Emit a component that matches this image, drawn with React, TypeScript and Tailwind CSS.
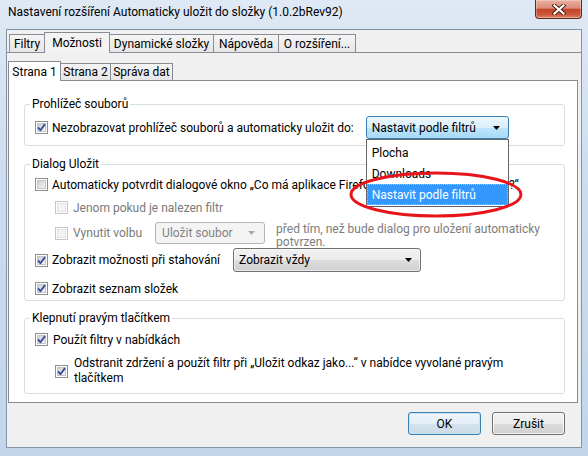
import React from "react";

function Check({ checked, disabled }: { checked?: boolean; disabled?: boolean }) {
  return (
    <svg width="13" height="13" viewBox="0 0 13 13" className="shrink-0">
      <defs>
        <linearGradient id="cbg" x1="0" y1="0" x2="1" y2="1">
          <stop offset="0" stopColor="#cdcdcd" />
          <stop offset="1" stopColor="#f7f7f7" />
        </linearGradient>
      </defs>
      <rect x="0.5" y="0.5" width="12" height="12" fill="#ffffff" stroke={disabled ? "#c6c6c6" : "#8e8f8f"} />
      <rect
        x="2.5"
        y="2.5"
        width="8"
        height="8"
        fill={disabled ? "#f3f3f3" : "url(#cbg)"}
        stroke={disabled ? "#e3e3e3" : "#c4c4c4"}
      />
      {checked && (
        <path d="M3.1 6.4 L5.4 9.2 L10 3.1" fill="none" stroke="#33489a" strokeWidth="1.8" strokeLinejoin="round" />
      )}
    </svg>
  );
}

function Arrow({ color }: { color: string }) {
  return (
    <svg width="7" height="4" viewBox="0 0 7 4" className="shrink-0">
      <path d="M0 0 H7 L3.5 4 Z" fill={color} />
    </svg>
  );
}

export default function App() {
  return (
    <div className="relative w-[588px] h-[456px] overflow-hidden flex flex-col bg-[linear-gradient(180deg,#dfe9f5,#cddcee_40%,#c2d5eb)] font-['Roboto',sans-serif] text-[12px] text-black">
      {/* title bar */}
      <div className="h-[29px] shrink-0 flex items-start">
        <div className="pl-[8px] pt-[5px] leading-[15px] whitespace-nowrap">
          Nastavení rozšíření Automaticky uložit do složky (1.0.2bRev92)
        </div>
        <div className="ml-auto mr-[6px] w-[47px] h-[19px] rounded-b-[4px] border border-t-0 border-[#5b2b22] bg-[linear-gradient(180deg,#eaae9f,#dc8c79_45%,#c4452a_52%,#cc5538_80%,#e0866a)] shadow-[inset_0_0_0_1px_rgba(255,255,255,0.3)] flex items-center justify-center">
          <svg width="14" height="11" viewBox="0 0 14 11" className="mt-[1px]">
            <path d="M2.5 1.5 L11.5 9.5 M11.5 1.5 L2.5 9.5" stroke="#4a1b12" strokeWidth="4" strokeLinecap="square" />
            <path d="M2.5 1.5 L11.5 9.5 M11.5 1.5 L2.5 9.5" stroke="#ffffff" strokeWidth="2.2" strokeLinecap="square" />
          </svg>
        </div>
      </div>

      {/* client area */}
      <div className="mx-[6px] h-[419px] shrink-0 border border-[#8493a6] bg-[#f0f0f0] flex flex-col">
        {/* top tabs */}
        <div className="h-[23px] shrink-0 flex items-end pl-[2px] border-b border-[#898c95]">
          <div className="w-[36px] h-[18px] flex items-center justify-center border border-b-0 border-[#898c95] bg-[linear-gradient(#f5f5f5,#e6e6e6)]">
            Filtry
          </div>
          <div className="relative z-10 -ml-px -mb-px w-[66px] h-[21px] flex items-center justify-center border border-b-0 border-[#898c95] bg-[#f3f3f3]">
            Možnosti
          </div>
          <div className="-ml-px w-[105px] h-[18px] flex items-center justify-center border border-b-0 border-[#898c95] bg-[linear-gradient(#f5f5f5,#e6e6e6)]">
            Dynamické složky
          </div>
          <div className="-ml-px w-[66px] h-[18px] flex items-center justify-center border border-b-0 border-[#898c95] bg-[linear-gradient(#f5f5f5,#e6e6e6)]">
            Nápověda
          </div>
          <div className="-ml-px w-[78px] h-[18px] flex items-center justify-center border border-b-0 border-[#898c95] bg-[linear-gradient(#f5f5f5,#e6e6e6)]">
            O rozšíření...
          </div>
        </div>

        {/* tab page */}
        <div className="flex-1 flex flex-col">
          <div className="ml-[1px] mr-[3px] flex flex-col">
            {/* sub tabs */}
            <div className="h-[27px] flex items-end">
              <div className="relative z-10 -mb-px w-[53px] h-[20px] flex items-center justify-center border border-b-0 border-[#898c95] bg-white">
                Strana 1
              </div>
              <div className="-ml-px w-[51px] h-[17px] flex items-center justify-center border border-b-0 border-[#898c95] bg-[linear-gradient(#f5f5f5,#e6e6e6)]">
                Strana 2
              </div>
              <div className="-ml-px w-[63px] h-[17px] flex items-center justify-center border border-b-0 border-[#898c95] bg-[linear-gradient(#f5f5f5,#e6e6e6)]">
                Správa dat
              </div>
            </div>

            {/* white panel */}
            <div className="h-[323px] border border-[#898c95] bg-white flex flex-col">
              {/* group 1 */}
              <fieldset className="ml-[15px] mr-[12px] mt-[16px] border border-[#d5dfe5] rounded-[3px] pl-[10px] pr-[10px] pb-[6px]">
                <legend className="-ml-[5px] px-[2px] leading-[14px]">Prohlížeč souborů</legend>
                <div className="mt-[5px] h-[23px] flex items-center">
                  <Check checked />
                  <span className="ml-[4px] whitespace-nowrap">Nezobrazovat prohlížeč souborů a automaticky uložit do:</span>
                  <div className="relative ml-[12px] w-[143px] h-[23px] shrink-0">
                    <div className="w-full h-full rounded-[3px] border border-[#3c7fb1] bg-[linear-gradient(#eaf6fd,#d9f0fc_50%,#bee6fd_50%,#a7d9f5)] flex items-center pl-[5px] pr-[8px]">
                      <span className="flex-1 whitespace-nowrap">Nastavit podle filtrů</span>
                      <Arrow color="#000000" />
                    </div>
                    {/* open dropdown list */}
                    <div className="absolute left-0 top-full z-20 w-full border border-[#646464] bg-white pt-[2px] pb-[1px]">
                      <div className="h-[21px] flex items-center pl-[5px]">Plocha</div>
                      <div className="h-[21px] flex items-center pl-[5px]">Downloads</div>
                      <div className="h-[21px] flex items-center pl-[4px] bg-[#3399ff] text-white border border-dotted border-[#e2c060]">
                        Nastavit podle filtrů
                      </div>
                    </div>
                  </div>
                </div>
              </fieldset>

              {/* group 2 */}
              <fieldset className="ml-[15px] mr-[12px] mt-[11px] border border-[#d5dfe5] rounded-[3px] pl-[10px] pr-[10px] pb-[3px]">
                <legend className="-ml-[5px] px-[2px] leading-[14px]">Dialog Uložit</legend>
                <div className="mt-[5px] h-[17px] flex items-center">
                  <Check />
                  <span className="ml-[4px] whitespace-nowrap">
                    Automaticky potvrdit dialogové okno „Co má aplikace Firefox udělat s tímto souborem?“
                  </span>
                </div>
                <div className="mt-[6px] h-[17px] flex items-center pl-[20px] text-[#7a7a7a]">
                  <Check disabled />
                  <span className="ml-[5px] whitespace-nowrap">Jenom pokud je nalezen filtr</span>
                </div>
                <div className="mt-[6px] h-[26px] flex items-start pl-[20px] text-[#7a7a7a]">
                  <div className="h-[22px] flex items-center shrink-0">
                    <Check disabled />
                    <span className="ml-[5px] whitespace-nowrap">Vynutit volbu</span>
                  </div>
                  <div className="ml-[13px] w-[110px] h-[22px] shrink-0 rounded-[3px] border border-[#b2b6ba] bg-[#f4f4f4] flex items-center pl-[6px] pr-[9px]">
                    <span className="flex-1 whitespace-nowrap text-[#838383]">Uložit soubor</span>
                    <Arrow color="#a8a8a8" />
                  </div>
                  <div className="ml-[11px] pt-[1px] leading-[13px] text-[#7d7d7d]">
                    před tím, než bude dialog pro uložení automaticky potvrzen.
                  </div>
                </div>
                <div className="h-[24px] flex items-center">
                  <Check checked />
                  <span className="ml-[4px] whitespace-nowrap">Zobrazit možnosti při stahování</span>
                  <div className="ml-[13px] w-[188px] h-[24px] shrink-0 rounded-[3px] border border-[#707070] bg-[linear-gradient(#f2f2f2,#ebebeb_50%,#dddddd_50%,#cfcfcf)] shadow-[inset_0_0_0_1px_rgba(255,255,255,0.6)] flex items-center pl-[5px] pr-[8px]">
                    <span className="flex-1 whitespace-nowrap">Zobrazit vždy</span>
                    <Arrow color="#000000" />
                  </div>
                </div>
                <div className="mt-[8px] h-[17px] flex items-center">
                  <Check checked />
                  <span className="ml-[4px] whitespace-nowrap">Zobrazit seznam složek</span>
                </div>
              </fieldset>

              {/* group 3 */}
              <fieldset className="ml-[15px] mr-[12px] mt-[10px] border border-[#d5dfe5] rounded-[3px] pl-[10px] pr-[10px] pb-[7px]">
                <legend className="-ml-[5px] px-[2px] leading-[14px]">Klepnutí pravým tlačítkem</legend>
                <div className="mt-[6px] h-[17px] flex items-center">
                  <Check checked />
                  <span className="ml-[5px] whitespace-nowrap">Použít filtry v nabídkách</span>
                </div>
                <div className="mt-[8px] flex items-center pl-[20px]">
                  <Check checked />
                  <div className="ml-[6px] w-[440px] leading-[15px]">
                    Odstranit zdržení a použít filtr při „Uložit odkaz jako...“ v nabídce vyvolané pravým tlačítkem
                  </div>
                </div>
              </fieldset>
            </div>
          </div>

          {/* buttons */}
          <div className="mt-[9px] flex justify-end gap-[11px] pr-[16px]">
            <div className="w-[73px] h-[23px] rounded-[3px] border border-[#3c7fb1] bg-[linear-gradient(#eef5fa,#e4eef5_50%,#d5e3ee_50%,#c9dae6)] shadow-[inset_0_0_0_1px_#bfe6fb] flex items-center justify-center">
              OK
            </div>
            <div className="w-[73px] h-[23px] rounded-[3px] border border-[#707070] bg-[linear-gradient(#f2f2f2,#ebebeb_50%,#dddddd_50%,#cfcfcf)] shadow-[inset_0_0_0_1px_rgba(255,255,255,0.7)] flex items-center justify-center">
              Zrušit
            </div>
          </div>
        </div>
      </div>

      {/* red annotation ellipse */}
      <svg
        className="absolute left-[348px] top-[170px] z-30 pointer-events-none"
        width="176"
        height="49"
        viewBox="0 0 176 49"
      >
        <ellipse cx="88" cy="24.5" rx="85" ry="21.5" fill="none" stroke="#e8141c" strokeWidth="3" />
      </svg>
    </div>
  );
}
